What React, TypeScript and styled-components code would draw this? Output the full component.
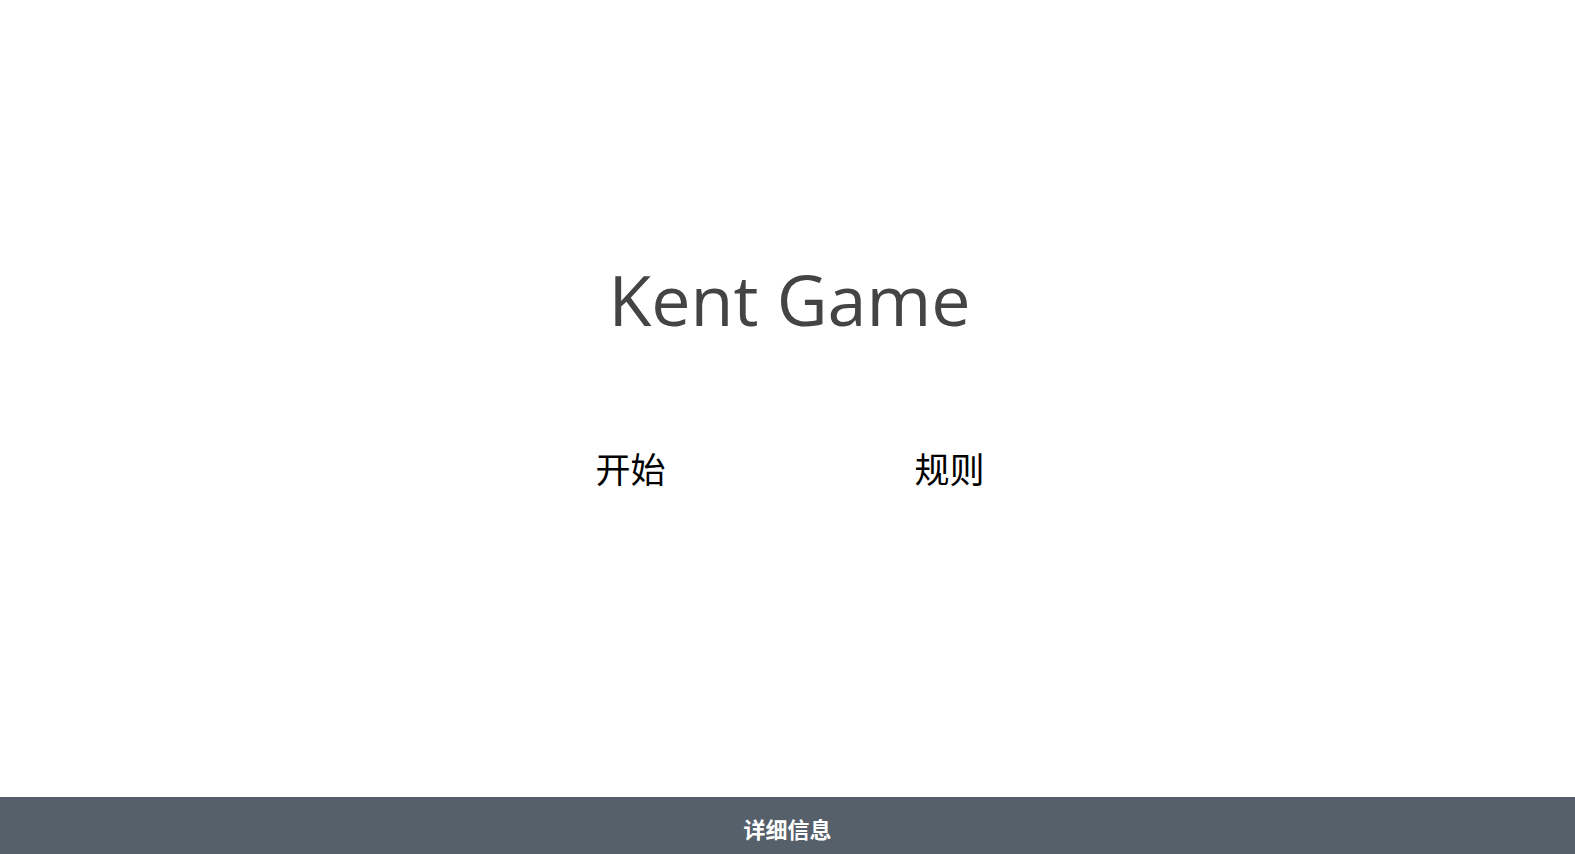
import React from "react";
import styled, { createGlobalStyle } from "styled-components";

const Global = createGlobalStyle`
  html, body { margin: 0; padding: 0; background: #fff; }
  body { font-family: "Noto Sans", "Noto Sans CJK SC", sans-serif; }
`;

const Page = styled.div`
  height: 854px;
  display: flex;
  flex-direction: column;
`;

const Main = styled.main`
  flex: 1;
  display: flex;
  flex-direction: column;
  align-items: center;
  padding-top: 249px;
`;

const Title = styled.h1`
  margin: 0;
  font-family: "Open Sans", "Noto Sans", sans-serif;
  font-weight: 400;
  font-size: 70px;
  line-height: 100px;
  color: #444;
  padding-left: 4px;
`;

const Menu = styled.nav`
  margin-top: 99px;
  display: flex;
  gap: 249px;
  padding-left: 5px;
`;

const MenuButton = styled.button`
  border: none;
  background: none;
  padding: 0;
  font-family: "Noto Sans CJK SC", sans-serif;
  font-size: 35px;
  line-height: 40px;
  color: #000;
  cursor: pointer;
`;

const Footer = styled.footer`
  height: 57px;
  background: #56606b;
  display: flex;
  align-items: center;
  justify-content: center;
  padding-top: 4px;
  box-sizing: border-box;
`;

const FooterLink = styled.span`
  color: #fff;
  font-family: "Noto Sans CJK SC", sans-serif;
  font-weight: 700;
  font-size: 22px;
`;

export default function App() {
  return (
    <>
      <Global />
      <Page>
        <Main>
          <Title>Kent Game</Title>
          <Menu>
            <MenuButton>开始</MenuButton>
            <MenuButton>规则</MenuButton>
          </Menu>
        </Main>
        <Footer>
          <FooterLink>详细信息</FooterLink>
        </Footer>
      </Page>
    </>
  );
}
